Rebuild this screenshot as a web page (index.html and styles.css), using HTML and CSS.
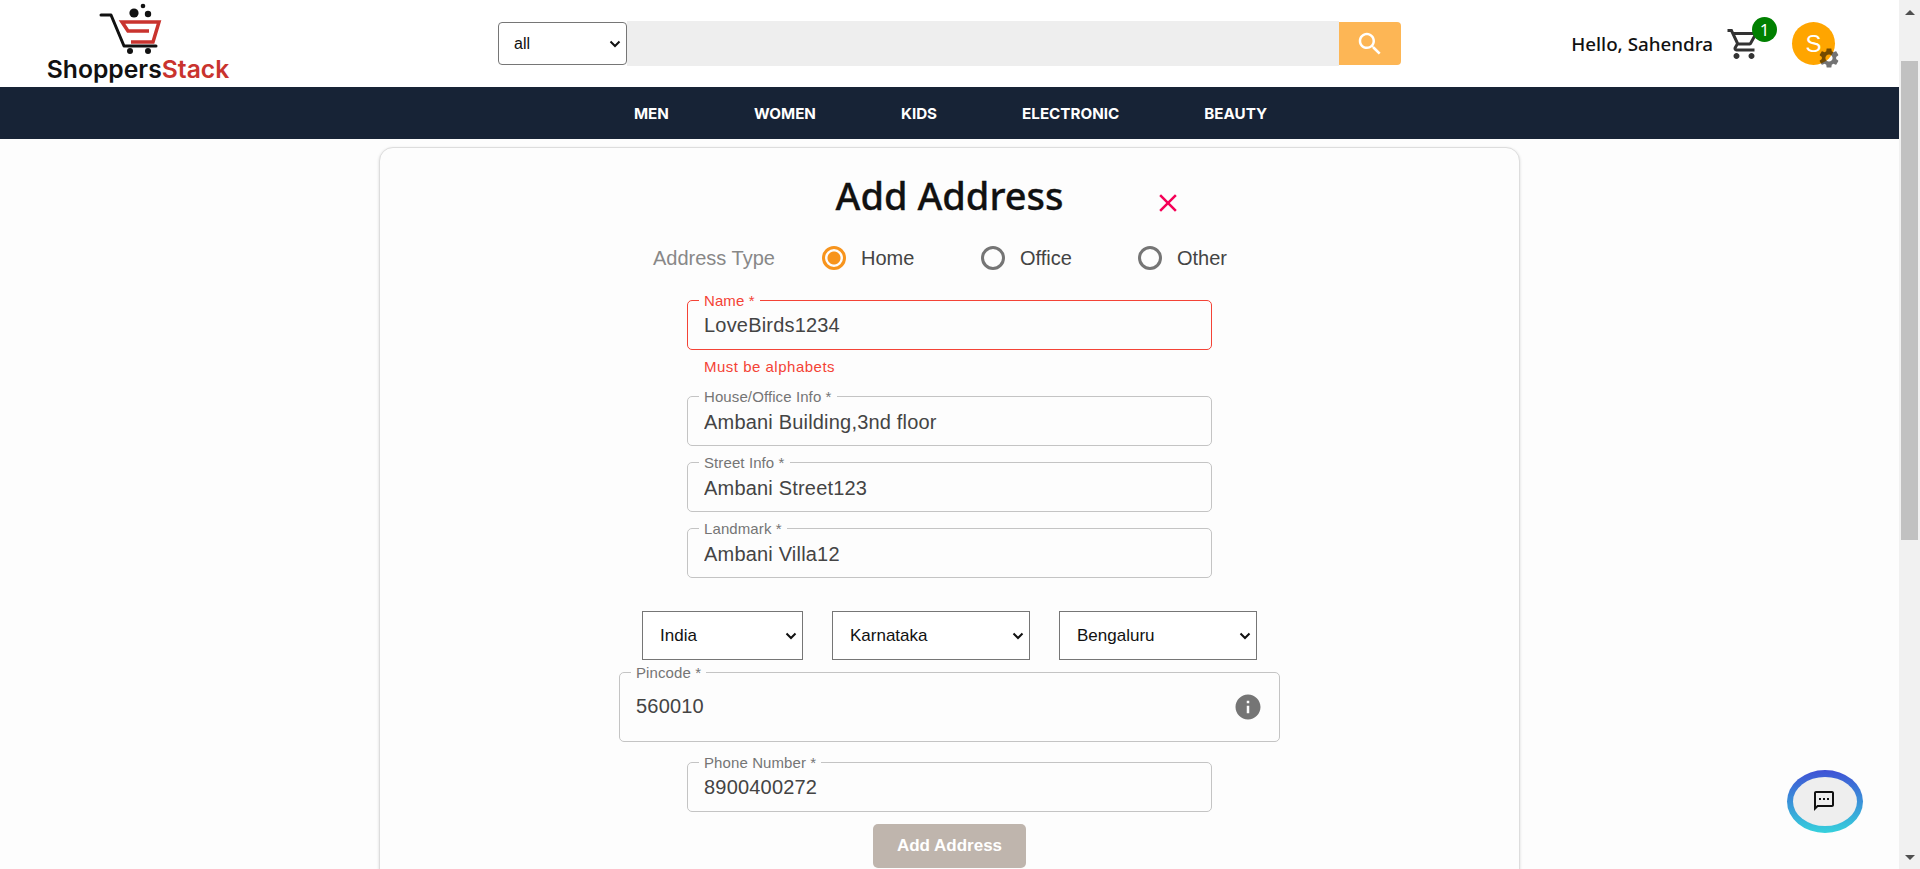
FILE: index.html
```html
<!DOCTYPE html>
<html lang="en">
<head>
    <meta charset="UTF-8">
    <meta name="viewport" content="width=device-width, initial-scale=1.0">
    <title>ShoppersStack - Add Address</title>
    <link rel="stylesheet" href="styles.css">
</head>
<body>
    <div class="page">
        <header class="topbar">
            <a class="logo" href="#">
                <svg class="logo-cart" width="70" height="56" viewBox="0 0 70 56">
                    <circle cx="38" cy="13" r="4.6" fill="#111"/>
                    <circle cx="52" cy="14" r="3.2" fill="#111"/>
                    <circle cx="47" cy="6" r="2.3" fill="#111"/>
                    <path d="M5 15H15L28 46H60" fill="none" stroke="#111" stroke-width="3" stroke-linecap="round" stroke-linejoin="round"/>
                    <circle cx="34" cy="51" r="3" fill="#111"/>
                    <circle cx="52" cy="51" r="3" fill="#111"/>
                    <path d="M53 31H32L26 22H63L57 42H35" fill="none" stroke="#c9332e" stroke-width="3.5"/>
                </svg>
                <span class="logo-text">Shoppers<span class="logo-red">Stack</span></span>
            </a>
            <form class="search">
                <select class="search-cat"><option>all</option></select>
                <input class="search-input" type="text">
                <button class="search-btn" type="button">
                    <svg width="30" height="30" viewBox="0 0 24 24" fill="#fff"><path d="M15.5 14h-.79l-.28-.27C15.41 12.59 16 11.11 16 9.5 16 5.91 13.09 3 9.5 3S3 5.91 3 9.5 5.91 16 9.5 16c1.61 0 3.09-.59 4.23-1.57l.27.28v.79l5 4.99L20.49 19l-4.99-5zm-6 0C7.01 14 5 11.99 5 9.5S7.01 5 9.5 5 14 7.01 14 9.5 11.99 14 9.5 14z"/></svg>
                </button>
            </form>
            <div class="user">
                <span class="hello">Hello, Sahendra</span>
                <span class="cart">
                    <svg width="36" height="36" viewBox="0 0 24 24" fill="#333"><path d="M15.55 13c.75 0 1.41-.41 1.75-1.03l3.58-6.49c.37-.66-.11-1.48-.87-1.48H5.21l-.94-2H1v2h2l3.6 7.59-1.35 2.44C4.52 15.37 5.48 17 7 17h12v-2H7l1.1-2h7.45zM6.16 6h12.15l-2.76 5H8.53L6.16 6zM7 18c-1.1 0-1.99.9-1.99 2S5.9 22 7 22s2-.9 2-2-.9-2-2-2zm10 0c-1.1 0-1.99.9-1.99 2s.89 2 1.99 2 2-.9 2-2-.9-2-2-2z"/></svg>
                    <span class="badge">1</span>
                </span>
                <span class="avatar">S
                    <svg class="gear" width="24" height="24" viewBox="0 0 24 24"><path d="M19.14 12.94c.04-.3.06-.61.06-.94 0-.32-.02-.64-.07-.94l2.03-1.58c.18-.14.23-.41.12-.61l-1.92-3.32c-.12-.22-.37-.29-.59-.22l-2.39.96c-.5-.38-1.03-.7-1.62-.94l-.36-2.54c-.04-.24-.24-.41-.48-.41h-3.84c-.24 0-.43.17-.47.41l-.36 2.54c-.59.24-1.13.57-1.62.94l-2.39-.96c-.22-.08-.47 0-.59.22L2.74 8.87c-.12.21-.08.47.12.61l2.03 1.58c-.05.3-.09.63-.09.94s.02.64.07.94l-2.03 1.58c-.18.14-.23.41-.12.61l1.92 3.32c.12.22.37.29.59.22l2.39-.96c.5.38 1.03.7 1.62.94l.36 2.54c.05.24.24.41.48.41h3.84c.24 0 .44-.17.47-.41l.36-2.54c.59-.24 1.13-.56 1.62-.94l2.39.96c.22.08.47 0 .59-.22l1.92-3.32c.12-.22.07-.47-.12-.61l-2.01-1.58zM12 15.6c-1.98 0-3.6-1.62-3.6-3.6s1.62-3.6 3.6-3.6 3.6 1.62 3.6 3.6-1.62 3.6-3.6 3.6z"/></svg>
                </span>
            </div>
        </header>

        <nav class="navbar">
            <a href="#">MEN</a>
            <a href="#">WOMEN</a>
            <a href="#">KIDS</a>
            <a href="#">ELECTRONIC</a>
            <a href="#">BEAUTY</a>
        </nav>

        <main class="content">
            <form class="card">
                <div class="card-head">
                    <span></span>
                    <h1>Add Address</h1>
                    <button class="close" type="button">
                        <svg width="30" height="30" viewBox="0 0 24 24" fill="#f50057"><path d="M19 6.41 17.59 5 12 10.59 6.41 5 5 6.41 10.59 12 5 17.59 6.41 19 12 13.41 17.59 19 19 17.59 13.41 12z"/></svg>
                    </button>
                </div>

                <div class="type-row">
                    <span class="type-label">Address Type</span>
                    <label class="radio radio-home"><input type="radio" name="type" checked>Home</label>
                    <label class="radio radio-office"><input type="radio" name="type">Office</label>
                    <label class="radio"><input type="radio" name="type">Other</label>
                </div>

                <fieldset class="field field-name error">
                    <legend>Name *</legend>
                    <input type="text" value="LoveBirds1234">
                </fieldset>
                <p class="helper">Must be alphabets</p>

                <fieldset class="field field-house">
                    <legend>House/Office Info *</legend>
                    <input type="text" value="Ambani Building,3nd floor">
                </fieldset>
                <fieldset class="field">
                    <legend>Street Info *</legend>
                    <input type="text" value="Ambani Street123">
                </fieldset>
                <fieldset class="field">
                    <legend>Landmark *</legend>
                    <input type="text" value="Ambani Villa12">
                </fieldset>

                <div class="selects">
                    <select class="sel-country"><option>India</option></select>
                    <select class="sel-state"><option>Karnataka</option></select>
                    <select class="sel-city"><option>Bengaluru</option></select>
                </div>

                <fieldset class="field field-pin">
                    <legend>Pincode *</legend>
                    <input type="text" value="560010">
                    <svg width="30" height="30" viewBox="0 0 24 24" fill="#757575"><path d="M12 2C6.48 2 2 6.48 2 12s4.48 10 10 10 10-4.48 10-10S17.52 2 12 2zm1 15h-2v-6h2v6zm0-8h-2V7h2v2z"/></svg>
                </fieldset>
                <fieldset class="field field-phone">
                    <legend>Phone Number *</legend>
                    <input type="text" value="8900400272">
                </fieldset>

                <button class="submit" type="button">Add Address</button>
            </form>
        </main>

        <button class="chat" type="button">
            <span class="chat-inner">
                <svg width="24" height="24" viewBox="0 0 24 24" fill="#111"><path d="M20 2H4c-1.1 0-1.99.9-1.99 2L2 22l4-4h14c1.1 0 2-.9 2-2V4c0-1.1-.9-2-2-2zm0 14H5.17L4 17.17V4h16v12zM7 9h2v2H7zm4 0h2v2h-2zm4 0h2v2h-2z"/></svg>
            </span>
        </button>
    </div>

    <div class="scrollbar">
        <span class="arrow-up"></span>
        <span class="thumb"></span>
        <span class="arrow-down"></span>
    </div>
</body>
</html>
```

FILE: styles.css
```css
* {
    box-sizing: border-box;
}
body {
    margin: 0;
    height: 100vh;
    display: flex;
    overflow: hidden;
    font-family: "Liberation Sans", Arial, sans-serif;
    background-color: #fdfdfd;
    color: #444;
}
.page {
    flex: 1;
    min-width: 0;
    display: flex;
    flex-direction: column;
    position: relative;
}
select {
    appearance: none;
    font-family: "Liberation Sans", Arial, sans-serif;
    background-color: #fff;
    background-image: url("data:image/svg+xml,%3Csvg xmlns='http://www.w3.org/2000/svg' width='12' height='8'%3E%3Cpath d='M1.5 1.5 6 6l4.5-4.5' fill='none' stroke='%23111' stroke-width='2'/%3E%3C/svg%3E");
    background-repeat: no-repeat;
    background-position: right 5px center;
    border: 1px solid #767676;
    color: #111;
}

/* top bar */
.topbar {
    height: 87px;
    flex-shrink: 0;
    display: flex;
    align-items: center;
    background-color: #fff;
    padding: 0 64px 0 47px;
}
.logo {
    width: 182px;
    height: 87px;
    display: flex;
    flex-direction: column;
    align-items: center;
    text-decoration: none;
}
.logo-cart {
    display: block;
    margin-right: 14px;
    flex-shrink: 0;
}
.logo-text {
    font-family: Inter, "Open Sans", sans-serif;
    font-size: 24.7px;
    font-weight: 600;
    line-height: 27px;
    color: #111;
    white-space: nowrap;
}
.logo-red {
    color: #c9332e;
}
.search {
    display: flex;
    align-items: center;
    margin-left: 269px;
}
.search-cat {
    width: 129px;
    height: 43px;
    padding-left: 15px;
    font-size: 16px;
    border-radius: 4px;
}
.search-input {
    width: 712px;
    height: 45px;
    border: none;
    background-color: #eee;
}
.search-btn {
    width: 62px;
    height: 43px;
    display: flex;
    align-items: center;
    justify-content: center;
    padding: 0;
    border: none;
    border-radius: 0 4px 4px 0;
    background-color: #fdb655;
}
.user {
    margin-left: auto;
    display: flex;
    align-items: center;
}
.hello {
    font-family: "Noto Sans", sans-serif;
    font-size: 18.8px;
    font-weight: 500;
    color: #111;
}
.cart {
    position: relative;
    display: flex;
    margin-left: 13px;
}
.badge {
    position: absolute;
    top: -9px;
    left: 26px;
    width: 25px;
    height: 25px;
    border-radius: 50%;
    background-color: green;
    color: #fff;
    font-family: "Noto Sans", sans-serif;
    font-size: 17px;
    line-height: 25px;
    text-align: center;
}
.avatar {
    position: relative;
    width: 43px;
    height: 43px;
    margin-left: 30px;
    border-radius: 50%;
    background-color: orange;
    color: #fff;
    font-size: 24px;
    line-height: 43px;
    text-align: center;
}
.gear {
    position: absolute;
    left: 25px;
    top: 24px;
    fill: rgba(0, 0, 0, 0.55);
}

/* nav */
.navbar {
    height: 52px;
    flex-shrink: 0;
    display: flex;
    align-items: center;
    justify-content: center;
    gap: 85px;
    padding-left: 2px;
    background-color: #172336;
}
.navbar a {
    font-family: Inter, sans-serif;
    font-size: 15.2px;
    font-weight: 700;
    color: #fff;
    text-decoration: none;
}

/* card */
.content {
    flex: 1;
    min-height: 0;
    overflow: hidden;
    padding-top: 8px;
}
.card {
    width: 1141px;
    margin: 0 auto;
    min-height: 800px;
    display: flex;
    flex-direction: column;
    align-items: center;
    background-color: #fdfdfd;
    border: 1px solid #ddd;
    border-radius: 14px;
    box-shadow: 0 1px 3px rgba(0, 0, 0, 0.15);
}
.card-head {
    width: 100%;
    display: grid;
    grid-template-columns: 1fr auto 1fr;
    align-items: center;
    padding-top: 22px;
}
.card-head h1 {
    margin: 0;
    font-family: "Noto Sans", sans-serif;
    font-size: 38px;
    font-weight: 500;
    line-height: 50px;
    color: #111;
    -webkit-text-stroke: 0.3px #111;
}
.close {
    justify-self: start;
    margin: 15px 0 0 90px;
    padding: 0;
    border: none;
    background: none;
    display: flex;
}
.type-row {
    width: 100%;
    display: flex;
    align-items: center;
    padding: 20px 0 0 273px;
    font-size: 20px;
    height: 56px;
}
.type-label {
    width: 169px;
    color: #888;
}
.radio {
    display: flex;
    align-items: center;
    gap: 15px;
}
.radio-home {
    width: 159px;
}
.radio-office {
    width: 157px;
}
.radio input {
    appearance: none;
    width: 24px;
    height: 24px;
    margin: 0;
    border: 3px solid #757575;
    border-radius: 50%;
}
.radio input:checked {
    border-color: #f7941d;
    background: radial-gradient(circle, #f7941d 0 6px, transparent 7px);
}
.field {
    width: 525px;
    height: 57px;
    margin: 17px 0 0;
    padding: 0 16px;
    border: 1px solid #c4c4c4;
    border-radius: 5px;
    min-width: 0;
}
.field legend {
    padding: 0 5px;
    margin-left: -5px;
    font-size: 15px;
    line-height: 15px;
    letter-spacing: 0.1px;
    color: #757575;
}
.field input {
    width: 100%;
    height: 36px;
    padding: 0;
    border: none;
    outline: none;
    background: none;
    font-family: "Liberation Sans", Arial, sans-serif;
    font-size: 20px;
    letter-spacing: 0.19px;
    color: #444;
}
.field-name input,
.field-phone input {
    height: 34px;
}
.field.error {
    border-color: #f44336;
}
.field.error legend,
.helper {
    color: #f44336;
}
.helper {
    width: 525px;
    margin: 7px 0 0;
    padding-left: 17px;
    font-size: 15px;
    line-height: 20px;
    letter-spacing: 0.5px;
}
.field-house {
    margin-top: 12px;
}
.field + .field {
    margin-top: 9px;
}
.selects {
    display: flex;
    gap: 29px;
    margin-top: 33px;
}
.selects select {
    height: 49px;
    padding-left: 17px;
    font-size: 17px;
    border-radius: 0;
}
.sel-country {
    width: 161px;
}
.sel-state,
.sel-city {
    width: 198px;
}
.field-pin {
    width: 661px;
    height: 77px;
    margin-top: 5px;
    display: flex;
    align-items: center;
    justify-content: space-between;
}
.field-pin svg {
    flex-shrink: 0;
}
.field-pin input {
    flex: 1;
    min-width: 0;
    height: 53px;
}
.field + .field-phone {
    margin-top: 13px;
}
.submit {
    width: 153px;
    height: 44px;
    margin-top: 12px;
    border: none;
    border-radius: 5px;
    background-color: #bfb5ad;
    color: #fff;
    font-family: "Liberation Sans", Arial, sans-serif;
    font-size: 17px;
    font-weight: 700;
}

/* chat button */
.chat {
    position: absolute;
    left: 1787px;
    top: 770px;
    width: 76px;
    height: 63px;
    padding: 7px 6px;
    border: none;
    border-radius: 50%;
    background: linear-gradient(#3f51d5, #36d1dc);
}
.chat-inner {
    width: 100%;
    height: 100%;
    display: flex;
    align-items: center;
    justify-content: center;
    padding: 0 3px 2px 0;
    border-radius: 50%;
    background-color: #eee;
}

/* scrollbar */
.scrollbar {
    width: 21px;
    flex-shrink: 0;
    display: flex;
    flex-direction: column;
    align-items: center;
    background-color: #f1f1f1;
    padding: 10px 0 9px;
}
.arrow-up,
.arrow-down {
    width: 0;
    height: 0;
    border-left: 5px solid transparent;
    border-right: 5px solid transparent;
}
.arrow-up {
    border-bottom: 5px solid #505050;
}
.arrow-down {
    margin-top: auto;
    border-top: 5px solid #505050;
}
.thumb {
    width: 17px;
    height: 479px;
    margin-top: 46px;
    background-color: #c1c1c1;
}
```
